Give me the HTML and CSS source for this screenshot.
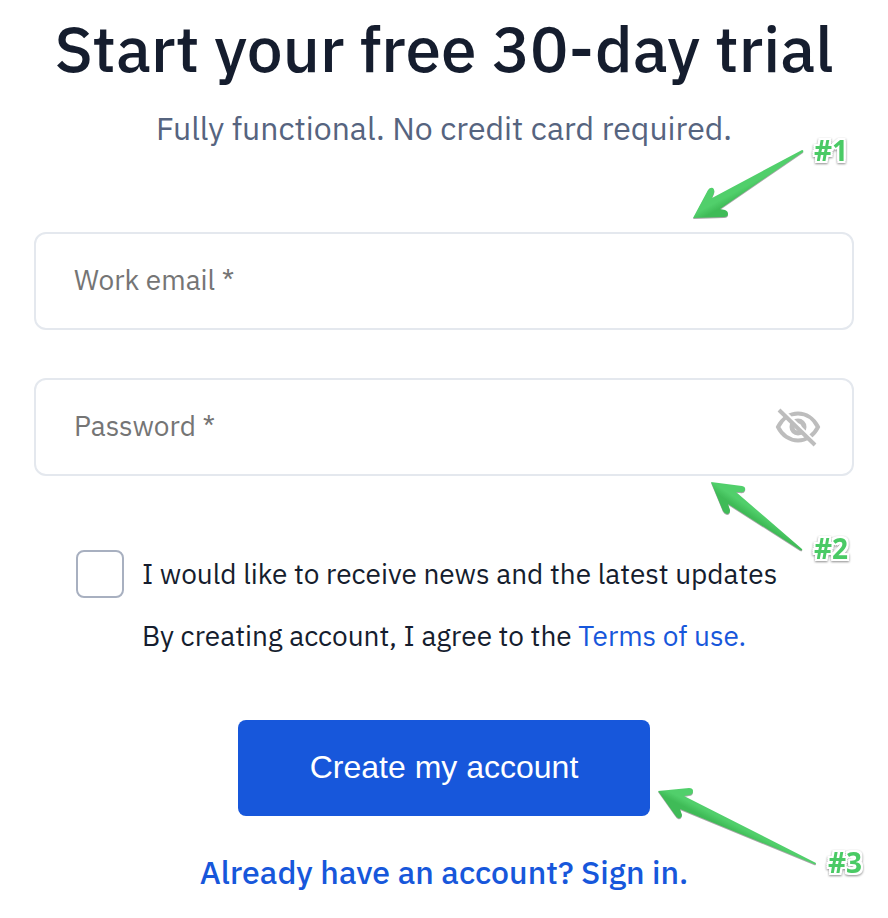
FILE: index.html
```html
<!DOCTYPE html>
<html lang="en">
<head>
<meta charset="utf-8">
<meta name="viewport" content="width=device-width, initial-scale=1">
<title>Start your free trial</title>
<link rel="stylesheet" href="styles.css">
</head>
<body>
<main class="signup">
  <h1 class="title">Start your free 30-day trial</h1>
  <p class="subtitle">Fully functional. No credit card required.</p>
  <form class="form">
    <div class="field">
      <input class="input" type="email" aria-label="Work email" placeholder="Work email *">
      <svg class="arrow arrow-email" width="112" height="72" viewBox="692 148 112 72" aria-hidden="true">
        <defs>
          <linearGradient id="g1" gradientUnits="userSpaceOnUse" x1="722" y1="194" x2="729" y2="207"><stop offset="0.3" stop-color="#51cf6b"/><stop offset="0.8" stop-color="#3fbb57"/></linearGradient>
        </defs>
        <path fill="url(#g1)" d="M802 150Q804 150 803 152L720 209L725 210Q728 211 728 214Q728 217 724 217L693 218L708 190Q710 187 713 188Q715 190 714 193L712 198Z"/>
      </svg>
      <span class="mark mark-email">#1</span>
    </div>
    <div class="field">
      <input class="input input-password" type="password" aria-label="Password" placeholder="Password *">
      <button class="reveal" type="button" aria-label="Show password">
        <svg width="48" height="44" viewBox="774 405 48 44" fill="none" stroke="#bdbdbd" stroke-width="4">
          <path d="M778 426C787 408 809 408 818 426C809 444 787 444 778 426Z"/>
          <circle cx="798" cy="426" r="6" stroke-width="5"/>
          <path stroke="#fff" stroke-width="3" d="M782 408L818 444"/>
          <path d="M779 409L815 444"/>
        </svg>
      </button>
      <svg class="arrow arrow-password" width="94" height="72" viewBox="710 480 94 72" aria-hidden="true">
        <defs>
          <linearGradient id="g2" gradientUnits="userSpaceOnUse" x1="741" y1="496" x2="733" y2="508"><stop offset="0.3" stop-color="#51cf6b"/><stop offset="0.8" stop-color="#3fbb57"/></linearGradient>
        </defs>
        <path fill="url(#g2)" d="M802 549Q803 551 800 550L728 504L730 510Q730 514 727 514Q725 514 723 511L711 482L742 486Q746 487 745 490Q744 493 740 492L736 492Z"/>
      </svg>
      <span class="mark mark-password">#2</span>
    </div>
    <div class="consent">
      <input class="check" type="checkbox" id="news">
      <label class="line" for="news">I would like to receive news and the latest updates</label>
      <p class="line terms">By creating account, I agree to the <a class="link" href="#">Terms of use.</a></p>
    </div>
    <div class="action">
      <button class="submit" type="submit">Create my account</button>
      <svg class="arrow arrow-submit" width="160" height="80" viewBox="657 786 160 80" aria-hidden="true">
        <defs>
          <linearGradient id="g3" gradientUnits="userSpaceOnUse" x1="693" y1="799" x2="687" y2="811"><stop offset="0.3" stop-color="#51cf6b"/><stop offset="0.8" stop-color="#3fbb57"/></linearGradient>
        </defs>
        <path fill="url(#g3)" d="M816 863Q816 865 814 864L680 809L682 815Q681 819 678 818Q677 818 675 815L658 791L689 788Q693 788 693 791Q693 795 689 795L684 796Z"/>
      </svg>
      <span class="mark mark-submit">#3</span>
    </div>
  </form>
  <a class="signin link" href="#">Already have an account? Sign in.</a>
</main>
</body>
</html>
```
FILE: styles.css
```css
* { box-sizing: border-box; }
body {
  margin: 0;
  background: #fff;
  color: #151d2e;
  font-family: "IBM Plex Sans", "Noto Sans", sans-serif;
  font-size: 28px;
}
.signup {
  display: flex;
  flex-direction: column;
  align-items: center;
  padding: 6px 34px 20px;
}
.title {
  margin: 0;
  font-size: 64px;
  font-weight: 500;
  line-height: 84px;
  white-space: nowrap;
}
.subtitle {
  margin: 18px 0 0;
  color: #56647f;
  font-size: 32px;
  line-height: 40px;
}
.form {
  display: flex;
  flex-direction: column;
  gap: 48px;
  width: 100%;
  margin-top: 84px;
}
.field { position: relative; display: flex; }
.input {
  width: 100%;
  height: 98px;
  padding: 0 38px 4px;
  border: 2px solid #e4e8ee;
  border-radius: 12px;
  background: #fff;
  color: inherit;
  font: inherit;
}
.input::placeholder { color: #757575; opacity: 1; }
.input-password { padding-right: 90px; }
.reveal {
  position: absolute;
  top: 28px;
  right: 32px;
  display: flex;
  padding: 0;
  border: 0;
  background: none;
}
.consent {
  display: grid;
  grid-template-columns: 48px 1fr;
  column-gap: 18px;
  row-gap: 14px;
  align-items: center;
  margin-top: 26px;
  padding-left: 42px;
}
.check {
  appearance: none;
  width: 48px;
  height: 48px;
  margin: 0;
  border: 2px solid #a8b0c0;
  border-radius: 8px;
}
.line { margin: 0; line-height: 48px; white-space: nowrap; }
.terms { grid-column: 2; }
.link { color: #1757db; text-decoration: none; }
.action { position: relative; display: flex; justify-content: center; margin-top: 12px; }
.submit {
  width: 412px;
  height: 96px;
  padding: 0 0 2px;
  border: 0;
  border-radius: 8px;
  background: #1757db;
  color: #fff;
  font: 32px "Liberation Sans", Arial, sans-serif;
}
.signin { margin-top: 36px; font-size: 32px; font-weight: 500; line-height: 40px; }
.arrow {
  position: absolute;
  filter: drop-shadow(0 1px 0 rgba(0, 0, 0, 0.35));
}
.arrow-email { right: 50px; bottom: 110px; }
.arrow-password { right: 50px; top: 102px; }
.arrow-submit { right: 37px; top: 66px; }
.mark {
  position: absolute;
  color: #4aca65;
  font: bold 28px/32px "Open Sans", sans-serif;
  text-shadow: 2px 0 #fff, -2px 0 #fff, 0 2px #fff, 0 -2px #fff, 2px 2px #fff, -2px 2px #fff, 2px -2px #fff, -2px -2px #fff;
  filter: drop-shadow(0 1px 1px rgba(0, 0, 0, 0.45));
}
.mark-email { right: 6px; bottom: 164px; }
.mark-password { right: 6px; top: 154px; }
.mark-submit { right: -8px; top: 126px; }
```
